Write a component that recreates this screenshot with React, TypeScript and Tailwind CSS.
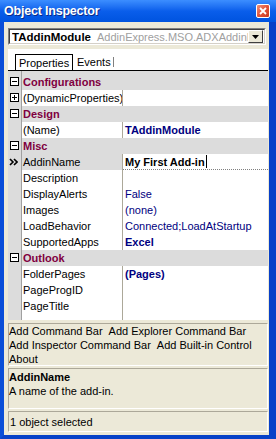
import type { ReactNode } from 'react'

type Row =
  | { kind: 'cat'; label: string }
  | { kind: 'prop'; name: string; value?: string; bold?: boolean; expand?: boolean; editing?: boolean }

const rows: Row[] = [
  { kind: 'cat', label: 'Configurations' },
  { kind: 'prop', name: '(DynamicProperties)', expand: true },
  { kind: 'cat', label: 'Design' },
  { kind: 'prop', name: '(Name)', value: 'TAddinModule', bold: true },
  { kind: 'cat', label: 'Misc' },
  { kind: 'prop', name: 'AddinName', value: 'My First Add-in', editing: true },
  { kind: 'prop', name: 'Description' },
  { kind: 'prop', name: 'DisplayAlerts', value: 'False' },
  { kind: 'prop', name: 'Images', value: '(none)' },
  { kind: 'prop', name: 'LoadBehavior', value: 'Connected;LoadAtStartup' },
  { kind: 'prop', name: 'SupportedApps', value: 'Excel', bold: true },
  { kind: 'cat', label: 'Outlook' },
  { kind: 'prop', name: 'FolderPages', value: '(Pages)', bold: true },
  { kind: 'prop', name: 'PageProgID' },
  { kind: 'prop', name: 'PageTitle' },
]

const commandLines = [
  ['Add Command Bar', 'Add Explorer Command Bar'],
  ['Add Inspector Command Bar', 'Add Built-in Control'],
  ['About'],
]

function ExpandBox({ plus = false }: { plus?: boolean }) {
  return (
    <svg width="9" height="9" viewBox="0 0 9 9" className="block">
      <rect x="0.5" y="0.5" width="8" height="8" fill="white" stroke="black" />
      <line x1="2" y1="4.5" x2="7" y2="4.5" stroke="black" />
      {plus && <line x1="4.5" y1="2" x2="4.5" y2="7" stroke="black" />}
    </svg>
  )
}

function Gutter({ children }: { children?: ReactNode }) {
  return (
    <div className="flex h-full w-[14px] shrink-0 items-start border-r border-[#A0A0A0] bg-[#DCDCDC] pl-[2px] pt-[3px]">
      {children}
    </div>
  )
}

function Panel({ className, children }: { className: string; children: ReactNode }) {
  return (
    <div className={`border-t border-l border-t-[#ACA899] border-l-[#ACA899] border-b border-r border-b-white border-r-white ${className}`}>
      {children}
    </div>
  )
}

export default function App() {
  return (
    <div className="flex h-[439px] w-[276px] flex-col overflow-hidden bg-[#0848D8] font-['Liberation_Sans',Tahoma,sans-serif] text-[11px] leading-[14px] text-black">
      {/* caption */}
      <div className="flex h-[22px] shrink-0 items-center justify-between bg-linear-to-b from-[#3C8EFF] via-[#0A5EEB] to-[#0053DF] pl-[4px] pr-[6px]">
        <span className="text-[12.5px] font-bold tracking-[-0.2px] text-white [text-shadow:1px_1px_0_#0A2A8A]">Object Inspector</span>
        <div className="flex h-[14px] w-[14px] items-center justify-center rounded-[2px] border border-white bg-linear-to-br from-[#F0907A] via-[#E2543A] to-[#C8381E]">
          <svg width="8" height="8" viewBox="0 0 8 8">
            <path d="M1 1 L7 7 M7 1 L1 7" stroke="white" strokeWidth="1.8" />
          </svg>
        </div>
      </div>

      <div className="flex min-h-0 flex-1 border-l-4 border-r-[7px] border-b-4 border-l-[#0A4ED8] border-r-[#0840C8] border-b-[#0842C8]">
        <div className="flex min-w-0 flex-1 flex-col bg-[#ECE9D8] pl-1 pr-px">
          {/* component combo */}
          <div className="mt-[6px] mr-[2px] h-[17px] border-t border-l border-t-[#808080] border-l-[#808080] border-b border-r border-b-white border-r-white">
            <div className="flex h-full items-center border-t border-l border-t-[#404040] border-l-[#404040] border-b border-r border-b-[#D4D0C8] border-r-[#D4D0C8] bg-white pl-[2px] pr-[1px]">
              <div className="flex min-w-0 flex-1 overflow-hidden whitespace-nowrap">
                <span className="text-[11.5px] font-bold">TAddinModule</span>
                <span className="ml-[6px] text-[#A0A0A0]">AddinExpress.MSO.ADXAddinModule</span>
              </div>
              <div className="flex h-[13px] w-[15px] shrink-0 items-center justify-center border-t border-l border-t-white border-l-white border-b border-r border-b-[#404040] border-r-[#404040] bg-[#ECE9D8]">
                <svg width="7" height="4" viewBox="0 0 7 4">
                  <path d="M0 0 H7 L3.5 4 Z" fill="black" />
                </svg>
              </div>
            </div>
          </div>

          {/* tabs */}
          <div className="mt-[4px] flex h-[22px] items-end border-b border-black bg-white pl-[7px]">
            <div className="flex h-[16px] w-[58px] items-center border-t border-l border-r border-black pl-[3px]">Properties</div>
            <div className="flex h-[16px] items-center pl-[4px]">
              Events
              <span className="ml-[2px] h-[10px] w-px bg-[#808080]" />
            </div>
          </div>

          {/* property grid */}
          <div className="flex h-[249px] flex-col bg-white">
            <div className="flex h-[3px] shrink-0 bg-[#DCDCDC]">
              <div className="w-[14px] border-r border-[#A0A0A0]" />
            </div>
            {rows.map((r, i) =>
              r.kind === 'cat' ? (
                <div key={i} className="flex h-4 shrink-0">
                  <Gutter>
                    <ExpandBox />
                  </Gutter>
                  <div className="flex flex-1 items-center bg-[#DCDCDC] pl-[1px] font-bold text-[#800040]">{r.label}</div>
                </div>
              ) : (
                <div key={i} className="flex h-4 shrink-0">
                  <Gutter>
                    {r.expand && <ExpandBox plus />}
                    {r.editing && (
                      <svg width="9" height="9" viewBox="0 0 9 9" className="-ml-[1px] mt-[1px]">
                        <path d="M1 1 L4 4 L1 7 M5 1 L8 4 L5 7" stroke="black" strokeWidth="1.6" fill="none" />
                      </svg>
                    )}
                  </Gutter>
                  <div
                    className={`flex w-[101px] shrink-0 items-center overflow-hidden whitespace-nowrap border-r border-[#ACA899] pl-[1px] ${
                      r.editing ? 'bg-[#DCDCDC]' : ''
                    }`}
                  >
                    {r.name}
                  </div>
                  <div
                    className={`flex min-w-0 flex-1 items-center whitespace-nowrap pl-[2px] ${
                      r.editing ? 'border-b border-dotted border-[#808080] font-bold text-black' : 'text-[#000080]'
                    } ${r.bold ? 'font-bold' : ''}`}
                  >
                    {r.value}
                    {r.editing && <span className="ml-px h-[13px] w-px bg-black" />}
                  </div>
                </div>
              ),
            )}
            <div className="flex flex-1">
              <div className="w-[14px] border-r border-[#A0A0A0] bg-[#DCDCDC]" />
              <div className="w-[101px] border-r border-[#ACA899]" />
            </div>
          </div>

          {/* commands */}
          <Panel className="mt-[3px] h-[43px] overflow-hidden">
            {commandLines.map((line, i) => (
              <div key={i} className="flex h-[14px] gap-x-[6px] whitespace-nowrap">
                {line.map((c) => (
                  <span key={c}>{c}</span>
                ))}
              </div>
            ))}
          </Panel>

          {/* description */}
          <Panel className="mt-[2px] h-[41px] pt-[1px]">
            <div className="font-bold">AddinName</div>
            <div>A name of the add-in.</div>
          </Panel>

          {/* status */}
          <Panel className="mt-[2px] flex h-[21px] items-center pl-[1px]">1 object selected</Panel>
        </div>
      </div>
    </div>
  )
}
